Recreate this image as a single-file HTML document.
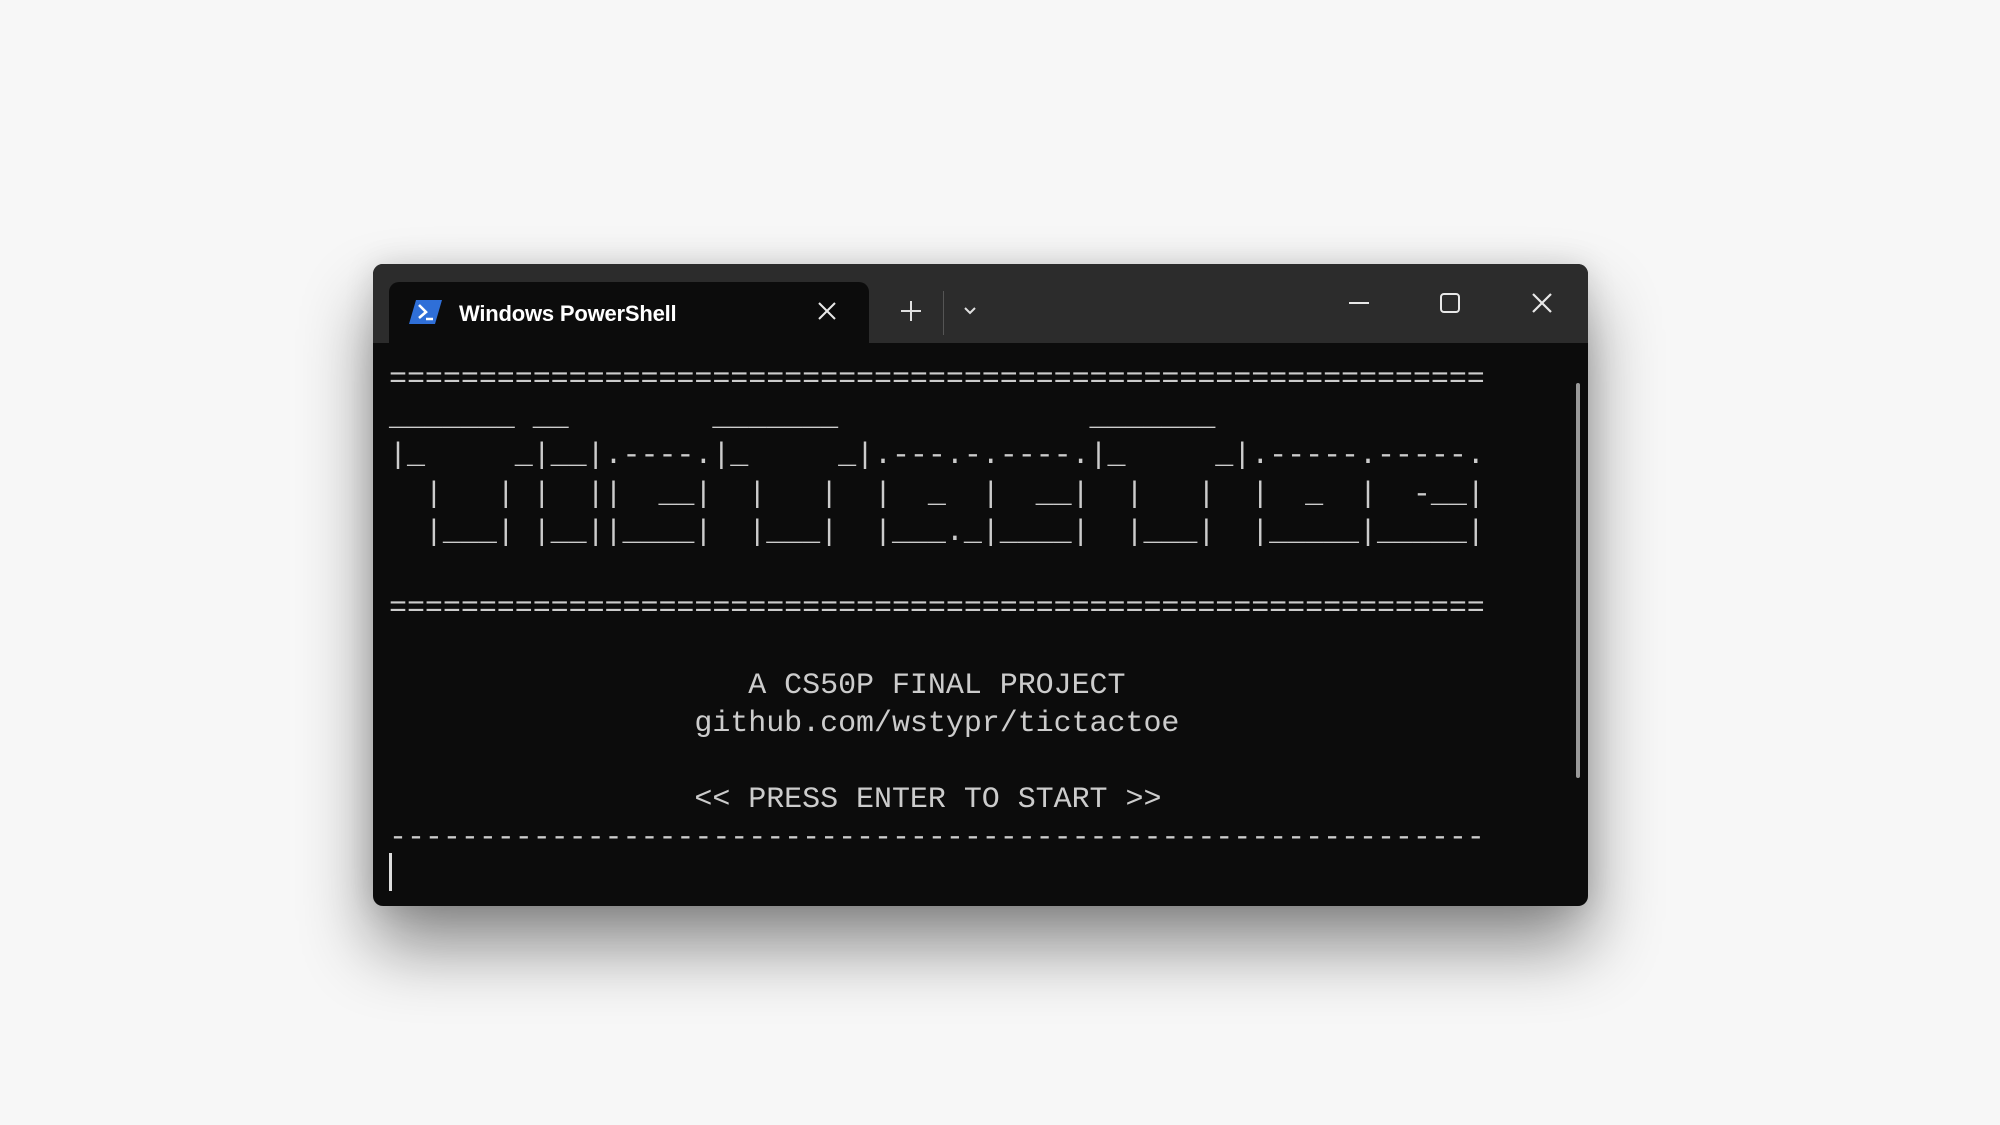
<!DOCTYPE html>
<html><head><meta charset="utf-8"><style>
html,body{margin:0;padding:0;width:2000px;height:1125px;background:#f7f7f7;overflow:hidden}
.win{position:absolute;left:373px;top:264px;width:1215px;height:642px;border-radius:10px;background:#0c0c0c;overflow:hidden;box-shadow:0 40px 70px rgba(0,0,0,0.45),0 0 30px rgba(0,0,0,0.12)}
.title{position:absolute;left:0;top:0;width:100%;height:79px;background:#2c2c2c}
.tab{position:absolute;left:16px;top:18px;width:480px;height:70px;background:#0c0c0c;border-radius:10px 10px 0 0}
.tabtext{position:absolute;left:86px;top:37px;font:bold 22px "Liberation Sans",sans-serif;color:#fff;letter-spacing:-0.2px}
.term{position:absolute;left:16px;top:97px;margin:0;font:30px/38.2px "Liberation Mono",monospace;color:#cccccc;white-space:pre;letter-spacing:-0.04px}
.sb{position:absolute;left:1203px;top:119px;width:4px;height:395px;background:#9a9a9a;border-radius:2px}
.cur{position:absolute;left:16px;top:589px;width:3px;height:38px;background:#ddd}
svg{position:absolute}
</style></head><body>
<div class="win">
<div class="title"></div>
<div class="tab"></div>
<svg style="left:36px;top:36px" width="33" height="24" viewBox="0 0 33 24"><polygon points="7,0 33,0 26,24 0,24" fill="#2f6fd8"/><polyline points="10,5 17,12 10,18" fill="none" stroke="#fff" stroke-width="2.6"/><line x1="17" y1="19" x2="24" y2="19" stroke="#fff" stroke-width="2.5"/></svg>
<div class="tabtext">Windows PowerShell</div>
<svg style="left:442px;top:35px" width="24" height="24" viewBox="0 0 24 24" stroke="#e8e8e8" stroke-width="2"><line x1="4" y1="4" x2="20" y2="20"/><line x1="20" y1="4" x2="4" y2="20"/></svg>
<svg style="left:526px;top:35px" width="24" height="24" viewBox="0 0 24 24" stroke="#e0e0e0" stroke-width="2"><line x1="12" y1="2" x2="12" y2="22"/><line x1="2" y1="12" x2="22" y2="12"/></svg>
<div style="position:absolute;left:570px;top:27px;width:1px;height:44px;background:#555"></div>
<svg style="left:589px;top:40px" width="16" height="14" viewBox="0 0 16 14" stroke="#e0e0e0" stroke-width="2" fill="none"><polyline points="3,4 8,9 13,4"/></svg>
<svg style="left:975px;top:30px" width="22" height="20" viewBox="0 0 22 20" stroke="#e8e8e8" stroke-width="2"><line x1="1" y1="9" x2="21" y2="9"/></svg>
<svg style="left:1066px;top:28px" width="22" height="22" viewBox="0 0 22 22" stroke="#e8e8e8" stroke-width="2" fill="none"><rect x="2" y="2" width="18" height="18" rx="3"/></svg>
<svg style="left:1158px;top:28px" width="22" height="22" viewBox="0 0 22 22" stroke="#e8e8e8" stroke-width="2.2"><line x1="2" y1="2" x2="20" y2="20"/><line x1="20" y1="2" x2="2" y2="20"/></svg>
<pre class="term">=============================================================
_______ __        _______              _______
|_     _|__|.----.|_     _|.---.-.----.|_     _|.-----.-----.
  |   | |  ||  __|  |   |  |  _  |  __|  |   |  |  _  |  -__|
  |___| |__||____|  |___|  |___._|____|  |___|  |_____|_____|

=============================================================

                    A CS50P FINAL PROJECT
                 github.com/wstypr/tictactoe

                 &lt;&lt; PRESS ENTER TO START &gt;&gt;
-------------------------------------------------------------</pre>
<div class="cur"></div>
<div class="sb"></div>
</div>
</body></html>
